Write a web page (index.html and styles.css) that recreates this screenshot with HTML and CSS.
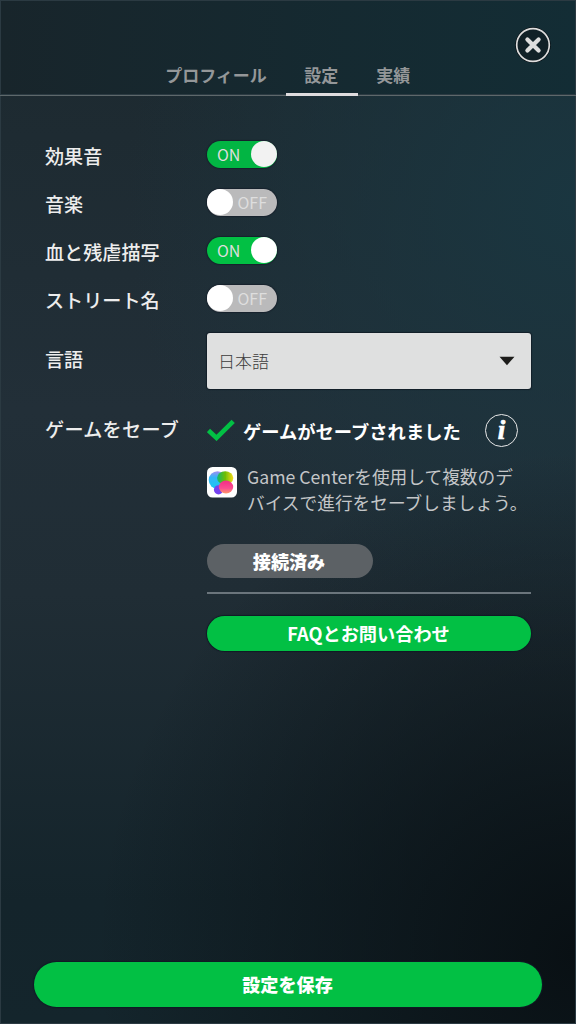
FILE: index.html
```html
<!DOCTYPE html>
<html lang="ja">
<head>
  <meta charset="UTF-8" />
  <meta name="viewport" content="width=device-width, initial-scale=1.0"/>
  <title>設定</title>
  <link rel="stylesheet" href="styles.css">
</head>
<body>

<!-- Header -->
<header>
  <nav class="tabs">
    <a class="tab">プロフィール</a>
    <a class="tab active">設定</a>
    <a class="tab">実績</a>
  </nav>
  <button class="close-btn" aria-label="閉じる">
    <svg width="36" height="36" viewBox="0 0 36 36">
      <circle cx="18" cy="18" r="16.7" fill="#112127" stroke="#05090d" stroke-width="2"/>
      <circle cx="18" cy="18" r="16.3" fill="none" stroke="#dedede" stroke-width="1.7"/>
      <path d="M12.4 12.4L23.6 23.6M23.6 12.4L12.4 23.6" stroke="#dedede" stroke-width="4.2" stroke-linecap="round"/>
    </svg>
  </button>
</header>

<!-- Settings -->
<main>
  <div class="row">
    <span class="label">効果音</span>
    <div class="toggle on first"><span>ON</span><i class="knob"></i></div>
  </div>
  <div class="row">
    <span class="label">音楽</span>
    <div class="toggle"><i class="knob"></i><span>OFF</span></div>
  </div>
  <div class="row">
    <span class="label">血と残虐描写</span>
    <div class="toggle on"><span>ON</span><i class="knob"></i></div>
  </div>
  <div class="row">
    <span class="label">ストリート名</span>
    <div class="toggle"><i class="knob"></i><span>OFF</span></div>
  </div>

  <div class="row language">
    <span class="label">言語</span>
    <div class="select">
      <span>日本語</span>
      <svg width="16" height="10" viewBox="0 0 16 10"><path d="M0.5 0.8H15.5L8 9.2Z" fill="#1d1d1b"/></svg>
    </div>
  </div>

  <div class="row save">
    <span class="label">ゲームをセーブ</span>
    <div class="saved">
      <svg class="check" width="28" height="22" viewBox="0 0 28 22"><path d="M1.5 11.5L9.5 18.9L26.2 2.3" fill="none" stroke="#02c044" stroke-width="4.6"/></svg>
      <strong>ゲームがセーブされました</strong>
      <span class="info">i</span>
    </div>
  </div>

  <div class="details">
    <div class="game-center">
      <svg width="30" height="31" viewBox="0 0 30 31">
        <defs>
          <linearGradient id="blue" x1="0" y1="0" x2="0" y2="1"><stop offset="0" stop-color="#a58df2"/><stop offset=".35" stop-color="#35b5f8"/><stop offset="1" stop-color="#19c9ef"/></linearGradient>
          <linearGradient id="green" x1="0" y1="0" x2="1" y2="0"><stop offset="0" stop-color="#10b870"/><stop offset=".5" stop-color="#6ebd04"/><stop offset="1" stop-color="#f8db18"/></linearGradient>
          <linearGradient id="pink" x1="0" y1="0" x2="0" y2="1"><stop offset="0" stop-color="#f32c85"/><stop offset=".6" stop-color="#fa4c91"/><stop offset="1" stop-color="#ff9868"/></linearGradient>
          <filter id="soft"><feGaussianBlur stdDeviation=".6"/></filter>
        </defs>
        <rect width="30" height="30.5" rx="5.5" fill="#fff"/>
        <g filter="url(#soft)">
          <circle cx="10.5" cy="13" r="8.8" fill="url(#blue)"/>
          <ellipse cx="18.2" cy="10.9" rx="8.1" ry="6.6" fill="url(#green)"/>
          <circle cx="11.5" cy="22.8" r="4.6" fill="#7442ef"/>
          <ellipse cx="19" cy="20" rx="7.2" ry="6.4" fill="url(#pink)"/>
        </g>
      </svg>
      <p>Game Centerを使用して複数のデ<br>バイスで進行をセーブしましょう。</p>
    </div>
    <button class="btn connected">接続済み</button>
    <hr>
    <button class="btn faq">FAQとお問い合わせ</button>
  </div>
</main>

<footer>
  <button class="btn save-btn">設定を保存</button>
</footer>

</body>
</html>
```
FILE: styles.css
```css
* {
  box-sizing: border-box;
}

body {
  margin: 0;
  height: 1024px;
  display: flex;
  flex-direction: column;
  font-family: 'Noto Sans CJK JP', sans-serif;
  color: #ededed;
  background:
    radial-gradient(ellipse 480px 500px at 100% 93%, #091014 0%, rgba(9, 16, 20, 0) 100%),
    radial-gradient(ellipse 450px 480px at 100% 20%, #1a3640 0%, rgba(26, 54, 64, 0) 100%),
    linear-gradient(to bottom, #1c292f 0%, #222f38 40%, #202d35 58%, #14242b 88%, #14252c 100%);
  box-shadow: inset 0 0 0 1px #2b3a42;
  overflow: hidden;
}

button {
  font-family: inherit;
  border: none;
  padding: 0;
}

header {
  position: relative;
  height: 96px;
  flex: none;
  background: linear-gradient(to right, #18252b, #132d35);
  border-bottom: 1px solid #5e686b;
  box-shadow: inset 0 0 0 1px #2b3a42;
}

.tabs {
  height: 96px;
  display: flex;
  justify-content: center;
  align-items: flex-end;
}

.tab {
  height: 40px;
  padding: 0 19px;
  font-size: 17px;
  line-height: 38px;
  font-weight: 700;
  text-indent: -0.5px;
  color: #949799;
}

.tab.active {
  width: 72px;
  border-bottom: 3px solid #dfdcde;
}

.close-btn {
  position: absolute;
  top: 27px;
  right: 25px;
  width: 36px;
  height: 36px;
  background: none;
}

.close-btn svg,
.saved svg,
.select svg {
  display: block;
}

main {
  flex: 1;
  padding: 35px 45px 0;
}

.row {
  height: 48px;
  display: grid;
  grid-template-columns: 162px 324px;
  align-items: center;
}

.label {
  margin-top: 2px;
  font-size: 19.1px;
  line-height: 28px;
  font-weight: 500;
}

.toggle {
  width: 70px;
  height: 27px;
  margin-bottom: 2px;
  display: flex;
  align-items: center;
  justify-content: space-between;
  border-radius: 14px;
  background: #bababb;
  box-shadow: 0 0 1px 1px #17222d;
  font-size: 16px;
  line-height: 24px;
  color: #dedede;
}

.toggle span {
  padding-right: 10px;
  margin-top: -1px;
}

.toggle.on {
  background: #02c044;
}

.toggle.on span {
  padding: 0 0 0 10px;
}

.toggle.first {
  background: #02b543;
}

.knob {
  width: 26px;
  height: 26px;
  border-radius: 50%;
  background: #fff;
}

.first .knob {
  background: #f2f2f2;
}

.language {
  height: 56px;
  margin-top: 10px;
}

.language .label {
  margin-top: -4px;
}

.select {
  height: 56px;
  padding: 0 16px 0 11px;
  display: flex;
  align-items: center;
  justify-content: space-between;
  border-radius: 3px;
  background: #dfe0e0;
  box-shadow: 0 0 1px 1px #121e28;
  font-size: 17px;
  line-height: 24px;
  font-weight: 300;
  color: #3c3c3c;
}

.save {
  height: 34px;
  margin-top: 24px;
}

.save .label {
  margin-top: -3px;
  letter-spacing: 0.3px;
}

.saved {
  display: flex;
  align-items: center;
}

.saved strong {
  flex: none;
  width: 250px;
  padding: 1px 0 0 8px;
  font-size: 18.3px;
  line-height: 28px;
  white-space: nowrap;
  color: #fff;
}

.saved .check {
  flex: none;
}

.info {
  width: 33px;
  height: 33px;
  flex: none;
  border: 1.5px solid #e8e8e8;
  border-radius: 50%;
  font: italic bold 27px/31px 'Liberation Serif', serif;
  -webkit-text-stroke: 0.7px #fff;
  text-align: center;
  color: #fff;
}

.details {
  margin: 16px 0 0 162px;
  width: 324px;
}

.game-center {
  display: flex;
  gap: 10px;
}

.game-center svg {
  flex: none;
  margin-top: 4px;
}

.game-center p {
  margin: 0;
  font-size: 17.7px;
  line-height: 26px;
  white-space: nowrap;
  color: #c4c6c8;
}

.btn {
  display: block;
  width: 100%;
  border-radius: 30px;
  font-weight: 700;
  text-align: center;
  color: #fff;
  background: #02c044;
  box-shadow: 0 0 1px 1px #101a26;
}

.connected {
  width: 166px;
  height: 34px;
  margin-top: 29px;
  padding-right: 2px;
  font-size: 18.1px;
  line-height: 34px;
  font-weight: 900;
  background: #5c6165;
  box-shadow: none;
}

hr {
  height: 2px;
  margin: 14px 0 22px;
  border: none;
  background: #6b757c;
}

.faq {
  height: 35px;
  padding-right: 1px;
  font-size: 18.2px;
  line-height: 35px;
}

footer {
  padding: 0 34px 17px;
}

.save-btn {
  height: 45px;
  padding-right: 1px;
  font-size: 18.1px;
  line-height: 45px;
  font-weight: 900;
}
```
